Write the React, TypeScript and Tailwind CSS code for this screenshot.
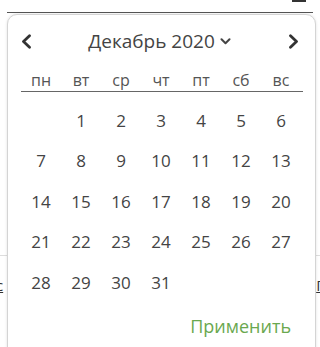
import React from "react";

const days: (number | null)[] = [null, ...Array.from({ length: 31 }, (_, i) => i + 1)];
const weekdays = ["пн", "вт", "ср", "чт", "пт", "сб", "вс"];

function ChevronLeft() {
  return (
    <svg width="12" height="15" viewBox="0 0 12 15" fill="none">
      <path d="M9.5 1.8 L3.5 7.5 L9.5 13.2" stroke="#333" strokeWidth="2.8" strokeLinecap="round" strokeLinejoin="round" />
    </svg>
  );
}
function ChevronRight() {
  return (
    <svg width="12" height="15" viewBox="0 0 12 15" fill="none">
      <path d="M2.5 1.8 L8.5 7.5 L2.5 13.2" stroke="#333" strokeWidth="2.8" strokeLinecap="round" strokeLinejoin="round" />
    </svg>
  );
}
function ChevronDown() {
  return (
    <svg width="11" height="7" viewBox="0 0 11 7" fill="none">
      <path d="M1.5 1.3 L5.5 5.3 L9.5 1.3" stroke="#444" strokeWidth="2" strokeLinecap="round" strokeLinejoin="round" />
    </svg>
  );
}

export default function App() {
  return (
    <div className="relative w-[320px] h-[347px] overflow-hidden bg-white" style={{ fontFamily: '"Open Sans", "Noto Sans", sans-serif' }}>
      {/* background page */}
      <div className="flex flex-col">
        <div className="h-[12px] flex justify-end pr-[14px]">
          <div className="w-[14px] h-[2px] bg-[#333]" />
        </div>
        <div className="mx-[7px] h-px bg-[#555]" />
        <div className="h-[242px]" />
        <div className="h-px bg-[#ddd]" />
        <div className="mt-[22px] flex justify-between text-[15px] text-[#333] leading-none">
          <span className="underline -ml-[4px]">c</span>
          <span className="underline -mr-[4px]">Г</span>
        </div>
      </div>

      {/* popup */}
      <div className="absolute left-[7px] top-[14px] w-[309px] h-[345px] bg-white rounded-[10px] border border-[#d4d4d4] shadow-[0_0_3px_rgba(0,0,0,0.12)] pl-[13px] pr-[14px] pt-[13px]">
        <div className="h-[26px] flex items-center justify-between">
          <div className="w-[20px] flex justify-center -ml-[5px]">
            <ChevronLeft />
          </div>
          <div className="flex items-center gap-[5px] text-[19px] text-[#444] leading-none -ml-[1px]">
            <span>Декабрь 2020</span>
            <ChevronDown />
          </div>
          <div className="w-[20px] flex justify-center -mr-[3px]">
            <ChevronRight />
          </div>
        </div>
        <div className="mt-[14px] h-[24px] grid grid-cols-7 items-center text-[16px] text-[#555] leading-none border-b border-[#666] -mr-[2px] pr-[2px]">
          {weekdays.map((w) => (
            <span key={w} className="text-center">{w}</span>
          ))}
        </div>
        <div className="pt-[8px] grid grid-cols-7 w-[280px]">
          {days.map((d, i) => (
            <div key={i} className="h-[40.5px] flex items-center justify-center text-[17px] text-[#444]">
              {d ?? ""}
            </div>
          ))}
        </div>
        <div className="mt-[11px] flex justify-end pr-[10px]">
          <span className="text-[18px] text-[#6aa84f] leading-[24px]">Применить</span>
        </div>
      </div>
    </div>
  );
}
